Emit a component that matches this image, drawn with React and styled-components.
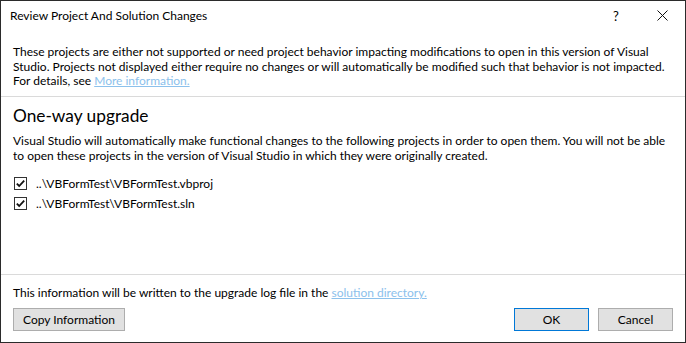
import React from 'react'
import styled, { createGlobalStyle } from 'styled-components'

const projects = [
  '..\\VBFormTest\\VBFormTest.vbproj',
  '..\\VBFormTest\\VBFormTest.sln',
]

export default function App() {
  return (
    <>
      <GlobalStyle />
      <Window>
        <TitleBar>
          <TitleText>Review Project And Solution Changes</TitleText>
          <TitleButton>?</TitleButton>
          <TitleButton>
            <svg width="11" height="11" viewBox="0 0 11 11">
              <path d="M0.5 0.5 L10.5 10.5 M10.5 0.5 L0.5 10.5" stroke="#111" strokeWidth="1" />
            </svg>
          </TitleButton>
        </TitleBar>
        <Intro>
          These projects are either not supported or need project behavior impacting modifications to open in this version of Visual
          <br />
          Studio. Projects not displayed either require no changes or will automatically be modified such that behavior is not impacted.
          <br />
          For details, see <Link>More information.</Link>
        </Intro>
        <Main>
          <Heading>One-way upgrade</Heading>
          <Paragraph>
            Visual Studio will automatically make functional changes to the following projects in order to open them. You will not be able
            <br />
            to open these projects in the version of Visual Studio in which they were originally created.
          </Paragraph>
          <List>
            {projects.map((p) => (
              <Row key={p}>
                <CheckBox>
                  <svg width="11" height="11" viewBox="0 0 11 11">
                    <path d="M1.8 5.6 L4.2 8 L9.2 2.6" stroke="#111" strokeWidth="1.8" fill="none" />
                  </svg>
                </CheckBox>
                <span>{p}</span>
              </Row>
            ))}
          </List>
        </Main>
        <Footer>
          <FooterText>
            This information will be written to the upgrade log file in the <Link>solution directory.</Link>
          </FooterText>
          <ButtonRow>
            <Button>Copy Information</Button>
            <Spacer />
            <Button $primary>OK</Button>
            <Button>Cancel</Button>
          </ButtonRow>
        </Footer>
      </Window>
    </>
  )
}

const GlobalStyle = createGlobalStyle`
  html, body {
    margin: 0;
    padding: 0;
    background: #ffffff;
  }
  body {
    font-family: "Segoe UI", Lato, sans-serif;
    font-size: 12px;
    color: #000;
  }
`

const Window = styled.div`
  width: 686px;
  height: 343px;
  box-sizing: border-box;
  border: 1px solid #2b2b2b;
  background: #fff;
  display: flex;
  flex-direction: column;
`

const TitleBar = styled.div`
  height: 29px;
  display: flex;
  align-items: center;
  padding-left: 9px;
`

const TitleText = styled.div`
  flex: 1;
  font-size: 12px;
  color: #000;
`

const TitleButton = styled.div`
  width: 46px;
  height: 29px;
  display: flex;
  align-items: center;
  justify-content: center;
  font-size: 13px;
`

const Intro = styled.div`
  padding: 15px 12px 7px 12px;
  line-height: 14.5px;
  white-space: nowrap;
  border-bottom: 1px solid #dadada;
`

const Link = styled.span`
  color: #8cc1ec;
  text-decoration: underline;
`

const Main = styled.div`
  flex: 1;
  padding: 7px 12px 0 11px;
  border-bottom: 1px solid #dadada;
`

const Heading = styled.div`
  font-size: 17.3px;
  line-height: 24px;
  padding-left: 1px;
`

const Paragraph = styled.div`
  margin-top: 5px;
  line-height: 15px;
  padding-left: 1px;
  white-space: nowrap;
`

const List = styled.div`
  margin-top: 11px;
  display: flex;
  flex-direction: column;
`

const Row = styled.div`
  height: 20px;
  display: flex;
  align-items: center;
  gap: 9px;
  padding-left: 2px;
`

const CheckBox = styled.div`
  width: 13px;
  height: 13px;
  box-sizing: border-box;
  border: 1px solid #333;
  display: flex;
  align-items: center;
  justify-content: center;
`

const Footer = styled.div`
  padding: 10px 12px 11px 12px;
`

const FooterText = styled.div`
  line-height: 15px;
`

const ButtonRow = styled.div`
  margin-top: 8px;
  display: flex;
  gap: 9px;
`

const Spacer = styled.div`
  flex: 1;
`

const Button = styled.div`
  height: 23px;
  min-width: 75px;
  padding: 0 9px;
  box-sizing: border-box;
  display: flex;
  align-items: center;
  justify-content: center;
  background: #e1e1e1;
  border: 1px solid ${(p) => (p.$primary ? '#0078d7' : '#adadad')};
`
